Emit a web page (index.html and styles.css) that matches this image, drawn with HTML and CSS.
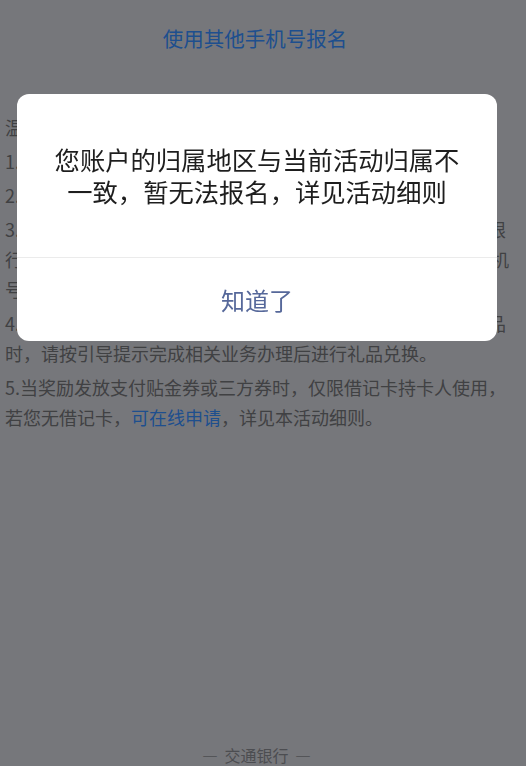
FILE: index.html
```html
<!DOCTYPE html>
<html lang="zh-CN">

<head>
    <meta charset="UTF-8">
    <meta name="viewport" content="width=device-width, initial-scale=1.0">
    <title>活动报名</title>
    <link rel="stylesheet" href="styles.css">
</head>

<body>
    <div class="page">
        <div class="switch-link">使用其他手机号报名</div>

        <div class="tips">
            <p>温馨提示：</p>
            <p>1.本活动仅限交通银行指定地区客户参与。</p>
            <p>2.每位客户活动期间仅可报名一次。</p>
            <p>3.报名成功后，请在活动有效期内完成指定任务，所获奖励仅限行内客户本人使用，奖励将于活动结束后发放至报名时登记手机号码对应账户。</p>
            <p>4.若您获得的活动奖励需办理指定业务后方可兑换相应实物礼品时，请按引导提示完成相关业务办理后进行礼品兑换。</p>
            <p>5.当奖励发放支付贴金券或三方券时，仅限借记卡持卡人使用，若您无借记卡，<span class="link">可在线申请</span>，详见本活动细则。</p>
        </div>

        <div class="footer">— 交通银行 —</div>
    </div>

    <!-- 弹窗 -->
    <div class="mask">
        <div class="dialog">
            <div class="dialog-msg">您账户的归属地区与当前活动归属不一致，暂无法报名，详见活动细则</div>
            <div class="dialog-btn">知道了</div>
        </div>
    </div>
</body>
</html>
```

FILE: styles.css
```css
body, html {
    margin: 0;
    padding: 0;
    width: 100%;
    height: 100%;
    overflow: hidden;
    font-family: "Noto Sans CJK SC", "Noto Sans", sans-serif;
}

body {
    background-color: #aaabb0;
}

.page {
    height: 100%;
    display: flex;
    flex-direction: column;
    box-sizing: border-box;
}

.switch-link {
    padding: 24px 16px 0 0;
    text-align: center;
    font-size: 20.5px;
    line-height: 28px;
    color: #2c71cc;
}

.tips {
    margin-top: 60px;
    padding: 0 11px 0 5px;
}

.tips p {
    margin: 0 0 4px 0;
    font-size: 18px;
    line-height: 30px;
    color: #5c5d61;
}

.tips .link {
    color: #2c71cc;
}

.footer {
    margin-top: auto;
    padding: 0 13px 1px 0;
    text-align: center;
    font-size: 16px;
    line-height: 20px;
    color: #6e6f74;
    word-spacing: 3px;
}

.mask {
    position: fixed;
    top: 0;
    left: 0;
    right: 0;
    bottom: 0;
    background-color: rgba(0, 0, 0, 0.3);
    padding: 94px 0 0 17px;
}

.dialog {
    width: 480px;
    background-color: #fff;
    border-radius: 12px;
    overflow: hidden;
}

.dialog-msg {
    padding: 49px 30px 50px;
    text-align: center;
    font-size: 25.3px;
    line-height: 32px;
    color: #1e1e1e;
    border-bottom: 1px solid #ebebeb;
}

.dialog-btn {
    height: 83px;
    line-height: 83px;
    text-align: center;
    font-size: 24px;
    color: #56689a;
}
```
